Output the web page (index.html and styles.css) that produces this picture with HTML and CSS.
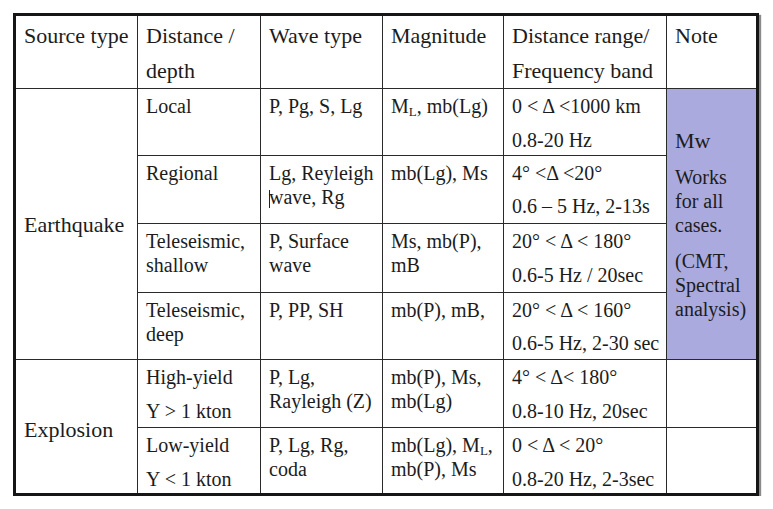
FILE: index.html
```html
<!DOCTYPE html>
<html>
<head>
<meta charset="utf-8">
<link rel="stylesheet" href="styles.css">
</head>
<body>
<div class="tbl">
  <div class="c h">Source type</div>
  <div class="c h">Distance /<br>depth</div>
  <div class="c h">Wave type</div>
  <div class="c h">Magnitude</div>
  <div class="c h">Distance range/<br>Frequency band</div>
  <div class="c h last">Note</div>

  <div class="c src eq">Earthquake</div>
  <div class="c">Local</div>
  <div class="c">P, Pg, S, Lg</div>
  <div class="c">M<sub class="sub">L</sub>, mb(Lg)</div>
  <div class="c"><p>0 &lt; Δ &lt;1000 km</p><p>0.8-20 Hz</p></div>
  <div class="c note last">
    <p class="mw">Mw</p>
    <p>Works<br>for all<br>cases.</p>
    <p>(CMT,<br>Spectral<br>analysis)</p>
  </div>

  <div class="c">Regional</div>
  <div class="c">Lg, Reyleigh<br><span class="caret"></span>wave, Rg</div>
  <div class="c">mb(Lg), Ms</div>
  <div class="c"><p>4° &lt;Δ &lt;20°</p><p class="tight">0.6 – 5 Hz, 2-13s</p></div>

  <div class="c">Teleseismic,<br>shallow</div>
  <div class="c">P, Surface<br>wave</div>
  <div class="c">Ms, mb(P),<br>mB</div>
  <div class="c"><p>20° &lt; Δ &lt; 180°</p><p>0.6-5 Hz / 20sec</p></div>

  <div class="c">Teleseismic,<br>deep</div>
  <div class="c">P, PP, SH</div>
  <div class="c">mb(P), mB,</div>
  <div class="c"><p>20° &lt; Δ &lt; 160°</p><p class="tight">0.6-5 Hz, 2-30 sec</p></div>

  <div class="c src ex bottom">Explosion</div>
  <div class="c"><p>High-yield</p><p>Y &gt; 1 kton</p></div>
  <div class="c">P, Lg,<br>Rayleigh (Z)</div>
  <div class="c">mb(P), Ms,<br>mb(Lg)</div>
  <div class="c"><p>4° &lt; Δ&lt; 180°</p><p>0.8-10 Hz, 20sec</p></div>
  <div class="c last"></div>

  <div class="c bottom"><p>Low-yield</p><p>Y &lt; 1 kton</p></div>
  <div class="c bottom">P, Lg, Rg,<br>coda</div>
  <div class="c bottom">mb(Lg), M<sub class="sub">L</sub>,<br>mb(P), Ms</div>
  <div class="c bottom"><p>0 &lt; Δ &lt; 20°</p><p>0.8-20 Hz, 2-3sec</p></div>
  <div class="c bottom last"></div>
</div>
</body>
</html>
```

FILE: styles.css
```css
html, body {
  margin: 0;
  padding: 0;
  background: #ffffff;
}

body {
  font-family: "Liberation Serif", "Times New Roman", serif;
  color: #1c1c1c;
}

.tbl {
  margin: 13px 0 0 13px;
  display: grid;
  grid-template-columns: 122px 123px 122px 121px 163px 89px;
  grid-template-rows: 73px 67px 68px 69px 67px 68px 65px;
  width: max-content;
  border: 3px solid #161616;
  box-shadow: 2px 2px 1px #8a8a8a;
}

.c {
  box-sizing: border-box;
  border-right: 1px solid #2a2a2a;
  border-bottom: 1px solid #2a2a2a;
  padding: 5px 4px 0 8px;
  font-size: 20px;
  line-height: 24px;
  white-space: nowrap;
}

.c p {
  margin: 0;
}

.c p + p {
  margin-top: 10px;
}

.c p.tight {
  margin-top: 9px;
}

.h {
  font-size: 22px;
  line-height: 35px;
  padding-top: 2px;
}

.last {
  border-right: none;
}

.bottom {
  border-bottom: none;
}

.src {
  font-size: 22px;
  line-height: 26px;
  display: flex;
  align-items: center;
  padding-top: 0;
}

.eq {
  grid-row: span 4;
  padding-top: 2px;
}

.ex {
  grid-row: span 2;
  padding-top: 7px;
}

.note {
  grid-row: span 4;
  background: #aaaade;
  padding-top: 40px;
}

.note p + p {
  margin-top: 12px;
}

.note .mw {
  font-size: 22px;
}

.sub {
  font-size: 13px;
  vertical-align: -3px;
  line-height: 0;
}

.caret {
  display: inline-block;
  width: 1px;
  height: 18px;
  background: #222;
  vertical-align: -4px;
  margin-right: -1px;
}
```
